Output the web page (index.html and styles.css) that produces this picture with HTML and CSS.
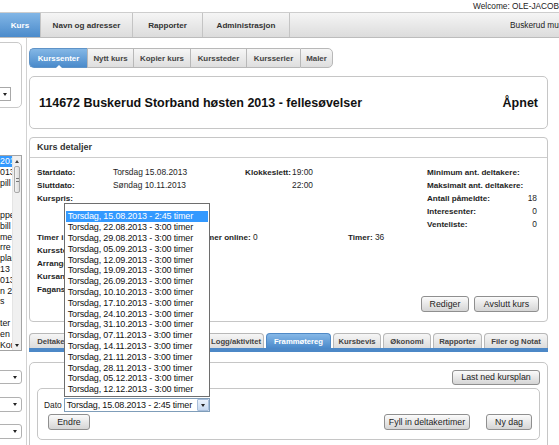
FILE: index.html
```html
<!DOCTYPE html>
<html lang="no">
<head>
<meta charset="utf-8">
<title>Kurssenter</title>
<link rel="stylesheet" href="styles.css">
</head>
<body>
<div class="welcome">Welcome: OLE-JACOB.</div>
<nav class="nav">
  <div class="nav-tab active t-kurs">Kurs</div>
  <div class="nav-tab t-navn">Navn og adresser</div>
  <div class="nav-tab t-rapp">Rapporter</div>
  <div class="nav-tab t-adm">Administrasjon</div>
  <div class="nav-rest">Buskerud musikkskole</div>
</nav>
<div class="page">
  <aside class="side">
    <div class="side-box">
      <div class="mini-select"><span class="arrow"></span></div>
    </div>
    <div class="side-list">
      <div class="side-items">
        <div class="li sel">201</div>
        <div class="li">013</div>
        <div class="li">pill</div>
        <div class="li"></div>
        <div class="li"></div>
        <div class="li">ppe</div>
        <div class="li">bill</div>
        <div class="li">mer</div>
        <div class="li">rre</div>
        <div class="li">plan</div>
        <div class="li">13 -</div>
        <div class="li">013</div>
        <div class="li">n 2</div>
        <div class="li">s</div>
        <div class="li"></div>
        <div class="li">ter</div>
        <div class="li">en</div>
        <div class="li">Kor</div>
      </div>
      <div class="vscroll">
        <div class="sb-btn"><span class="up"></span></div>
        <div class="sb-thumb"><span class="grip"></span></div>
        <div class="sb-track"></div>
        <div class="sb-btn"><span class="arrow"></span></div>
      </div>
    </div>
    <div class="side-select s1"><span class="arrow"></span></div>
    <div class="side-select s2"><span class="arrow"></span></div>
    <div class="side-select s3"><span class="arrow"></span></div>
  </aside>

  <main class="main">
    <div class="subtabs">
      <div class="st active w58">Kurssenter</div>
      <div class="st w46">Nytt kurs</div>
      <div class="st w57">Kopier kurs</div>
      <div class="st w56">Kurssteder</div>
      <div class="st w54">Kursserier</div>
      <div class="st w33 last">Maler</div>
    </div>

    <div class="titlebox">
      <h1 class="title">114672 Buskerud Storband høsten 2013 - fellesøvelser</h1>
      <span class="status">Åpnet</span>
    </div>

    <section class="details">
      <div class="details-head">Kurs detaljer</div>
      <div class="details-body">
        <div class="dgrid">
          <b>Startdato:</b><span>Torsdag 15.08.2013</span><b class="ra span2">Klokkeslett:</b><span>19:00</span><span></span><b>Minimum ant. deltakere:</b><span class="val"></span>
          <b>Sluttdato:</b><span>Søndag 10.11.2013</span><span></span><span></span><span>22:00</span><span></span><b>Maksimalt ant. deltakere:</b><span class="val"></span>
          <b>Kurspris:</b><span></span><span></span><span></span><span></span><span></span><b>Antall påmeldte:</b><span class="val">18</span>
          <span></span><span></span><span></span><span></span><span></span><span></span><b>Interesenter:</b><span class="val">0</span>
          <span></span><span></span><span></span><span></span><span></span><span></span><b>Venteliste:</b><span class="val">0</span>
          <b>Timer i klasse:</b><span></span><span><b>Timer online:</b> 0</span><span></span><span></span><span><b>Timer:</b> 36</span><span></span><span class="val"></span>
          <b>Kurssted:</b><span></span><span></span><span></span><span></span><span></span><span></span><span class="val"></span>
          <b>Arrangør:</b><span></span><span></span><span></span><span></span><span></span><span></span><span class="val"></span>
          <b>Kursansvarlig:</b><span></span><span></span><span></span><span></span><span></span><span></span><span class="val"></span>
          <b>Fagansvarlig:</b><span></span><span></span><span></span><span></span><span></span><span></span><span class="val"></span>
        </div>
        <div class="btnrow">
          <button class="btn b-rediger">Rediger</button>
          <button class="btn b-avslutt">Avslutt kurs</button>
        </div>
      </div>
    </section>

    <div class="btabs">
      <div class="bt bw51">Deltakere</div>
      <div class="bt bw54">Venteliste</div>
      <div class="bt bw60">Kursplan</div>
      <div class="bt bw64 logg">Logg/aktivitet</div>
      <div class="bt active bw65">Frammøtereg</div>
      <div class="bt bw48">Kursbevis</div>
      <div class="bt bw48">Økonomi</div>
      <div class="bt bw49">Rapporter</div>
      <div class="bt bw64">Filer og Notat</div>
    </div>
    <div class="bbar"></div>

    <section class="panel">
      <div class="panel-top">
        <button class="btn b-last">Last ned kursplan</button>
      </div>
      <div class="inner">
        <div class="dato-row">
          <span class="dato">Dato</span>
          <div class="combo">
            <span class="combo-text">Torsdag, 15.08.2013 - 2:45 timer</span>
            <span class="combo-btn"><span class="arrow"></span></span>
            <div class="droplist">
              <div class="opt hl">Torsdag, 15.08.2013 - 2:45 timer</div>
              <div class="opt">Torsdag, 22.08.2013 - 3:00 timer</div>
              <div class="opt">Torsdag, 29.08.2013 - 3:00 timer</div>
              <div class="opt">Torsdag, 05.09.2013 - 3:00 timer</div>
              <div class="opt">Torsdag, 12.09.2013 - 3:00 timer</div>
              <div class="opt">Torsdag, 19.09.2013 - 3:00 timer</div>
              <div class="opt">Torsdag, 26.09.2013 - 3:00 timer</div>
              <div class="opt">Torsdag, 10.10.2013 - 3:00 timer</div>
              <div class="opt">Torsdag, 17.10.2013 - 3:00 timer</div>
              <div class="opt">Torsdag, 24.10.2013 - 3:00 timer</div>
              <div class="opt">Torsdag, 31.10.2013 - 3:00 timer</div>
              <div class="opt">Torsdag, 07.11.2013 - 3:00 timer</div>
              <div class="opt">Torsdag, 14.11.2013 - 3:00 timer</div>
              <div class="opt">Torsdag, 21.11.2013 - 3:00 timer</div>
              <div class="opt">Torsdag, 28.11.2013 - 3:00 timer</div>
              <div class="opt">Torsdag, 05.12.2013 - 3:00 timer</div>
              <div class="opt">Torsdag, 12.12.2013 - 3:00 timer</div>
            </div>
          </div>
        </div>
        <div class="act-row">
          <button class="btn b-endre">Endre</button>
          <div class="act-right">
            <button class="btn b-fyll">Fyll in deltakertimer</button>
            <button class="btn b-ny">Ny dag</button>
          </div>
        </div>
      </div>
    </section>
  </main>
</div>
</body>
</html>
```

FILE: styles.css
```css
* { box-sizing: border-box; }
html, body { margin: 0; padding: 0; }
body {
  width: 559px;
  height: 445px;
  overflow: hidden;
  background: #fff;
  color: #1e1e1e;
  font-family: "Liberation Sans", Arial, sans-serif;
  font-size: 8.4px;
}

/* ---------- top ---------- */
.welcome {
  height: 12px;
  line-height: 12px;
  padding-left: 473px;
  white-space: nowrap;
  overflow: hidden;
  font-size: 8.3px;
  color: #222;
}
.nav {
  display: flex;
  height: 26px;
  background: linear-gradient(#f5f5f5, #dcdcdc);
  border-top: 1px solid #cdcdcd;
  border-bottom: 1px solid #bcbcbc;
}
.nav-tab {
  flex: none;
  display: flex;
  align-items: center;
  justify-content: center;
  font-weight: bold;
  font-size: 8.1px;
  color: #333;
  border-right: 1px solid #c4c4c4;
}
.nav-tab.active {
  background: linear-gradient(#82b6e6, #4b8bcb);
  color: #fff;
}
.t-kurs { width: 41px; }
.t-navn { width: 92px; }
.t-rapp { width: 70px; }
.t-adm { width: 87px; }
.nav-rest {
  flex: 1;
  display: flex;
  align-items: center;
  padding-left: 220px;
  white-space: nowrap;
  overflow: hidden;
  font-size: 8.3px;
  color: #222;
}

.page { display: flex; }

/* ---------- sidebar ---------- */
.side {
  flex: none;
  width: 27px;
  height: 407px;
  border-right: 1px solid #d2d2d2;
  overflow: hidden;
}
.arrow {
  display: block;
  width: 0;
  height: 0;
  border-left: 2.5px solid transparent;
  border-right: 2.5px solid transparent;
  border-top: 3px solid #222;
}
.up {
  display: block;
  width: 0;
  height: 0;
  border-left: 2.5px solid transparent;
  border-right: 2.5px solid transparent;
  border-bottom: 3px solid #444;
}
.side-box {
  margin: 4px 0 0 -10px;
  width: 32px;
  height: 66px;
  border: 1px solid #c9c9c9;
  border-radius: 0 5px 5px 0;
}
.mini-select {
  margin-top: 44px;
  width: 20px;
  height: 14px;
  border: 1px solid #a8a8a8;
  border-left: none;
  display: flex;
  align-items: center;
  justify-content: flex-end;
  padding-right: 3px;
}
.side-list {
  margin: 47px 0 0 -10px;
  width: 32px;
  height: 196px;
  border: 1px solid #a3a3a3;
  display: flex;
}
.side-items {
  flex: 1;
  overflow: hidden;
}
.li {
  height: 10.8px;
  line-height: 10.8px;
  padding-left: 9px;
  white-space: nowrap;
  font-size: 8.8px;
  color: #111;
}
.li.sel { background: #3399ff; color: #fff; }
.vscroll {
  flex: none;
  width: 9px;
  display: flex;
  flex-direction: column;
  background: #f0f0f0;
  border-left: 1px solid #e4e4e4;
}
.sb-btn {
  height: 10px;
  display: flex;
  align-items: center;
  justify-content: center;
}
.sb-thumb {
  height: 27px;
  margin: 0 1px;
  border: 1px solid #a9a9a9;
  border-radius: 2px;
  background: linear-gradient(90deg, #f4f4f4, #dcdcdc);
  display: flex;
  align-items: center;
  justify-content: center;
}
.grip {
  display: block;
  width: 3px;
  height: 4px;
  border-top: 1px solid #777;
  border-bottom: 1px solid #777;
}
.sb-track { flex: 1; }
.side-select {
  margin-left: -10px;
  width: 32px;
  border: 1px solid #b1b1b1;
  border-radius: 0 3px 3px 0;
  display: flex;
  align-items: center;
  justify-content: flex-end;
  padding-right: 4px;
}
.s1 { margin-top: 19px; height: 14px; }
.s2 { margin-top: 13px; height: 15px; }
.s3 { margin-top: 12px; height: 15px; }

/* ---------- main ---------- */
.main {
  flex: none;
  width: 519px;
  margin-left: 2px;
}
.subtabs {
  display: flex;
  margin-top: 10px;
  height: 20px;
}
.st {
  position: relative;
  display: flex;
  align-items: center;
  justify-content: center;
  font-weight: bold;
  font-size: 7.9px;
  color: #444;
  background: linear-gradient(#f6f6f6, #dedede);
  border: 1px solid #b8b8b8;
  border-right: none;
}
.st.last { border-right: 1px solid #b8b8b8; border-radius: 0 5px 5px 0; }
.st.active {
  background: linear-gradient(#84b7e6, #4a8acb);
  border-color: #5f93c7;
  color: #fff;
  border-radius: 5px 0 0 5px;
}
.st.active::after {
  content: "";
  position: absolute;
  left: 50%;
  bottom: -1px;
  margin-left: -3px;
  border-left: 3px solid transparent;
  border-right: 3px solid transparent;
  border-bottom: 3px solid #fff;
}
.w58 { width: 58px; }
.w46 { width: 46px; }
.w57 { width: 57px; }
.w56 { width: 56px; }
.w54 { width: 54px; }
.w33 { width: 33px; }

.titlebox {
  margin-top: 8px;
  height: 53px;
  border: 1px solid #c6c6c6;
  border-radius: 5px;
  display: flex;
  align-items: center;
  justify-content: space-between;
  padding: 0 9px 0 9px;
}
.title, .status {
  margin: 0;
  font-size: 12.5px;
  font-weight: bold;
  color: #111;
}

.details {
  margin-top: 8px;
  height: 185px;
  border: 1px solid #c6c6c6;
  border-radius: 4px;
}
.details-head {
  height: 20px;
  line-height: 19px;
  padding-left: 7px;
  border-bottom: 1px solid #cdcdcd;
  font-weight: bold;
  font-size: 9px;
  color: #333;
}
.details-body {
  padding: 8px 8px 0 7px;
}
.dgrid {
  display: grid;
  grid-template-columns: 76px 87px 49px 43px 56px 79px 1fr auto;
  grid-auto-rows: 13px;
  line-height: 13px;
  white-space: nowrap;
}
.dgrid b { font-weight: bold; font-size: 8.1px; }
.dgrid .span2 { grid-column: span 2; }
.dgrid .ra { text-align: right; padding-right: 1px; }
.val { text-align: right; padding-right: 2px; }
.btnrow {
  display: flex;
  justify-content: flex-end;
  gap: 5px;
}

.btn {
  height: 16px;
  padding: 0;
  border: 1px solid #8f8f8f;
  border-radius: 3px;
  background: linear-gradient(#fbfbfb, #d5d5d5);
  font-family: "Liberation Sans", Arial, sans-serif;
  font-size: 8.8px;
  color: #1e1e1e;
  text-align: center;
  line-height: 14px;
}
.b-rediger { width: 48px; }
.b-avslutt { width: 65px; }
.b-last { width: 88px; height: 15px; line-height: 13px; }
.b-endre { width: 42px; margin-left: 4px; }
.b-fyll { width: 86px; }
.b-ny { width: 46px; }

.btabs {
  display: flex;
  gap: 2px;
  margin-top: 11px;
  height: 15px;
}
.bt {
  flex: none;
  display: flex;
  align-items: center;
  justify-content: center;
  white-space: nowrap;
  overflow: hidden;
  font-weight: bold;
  font-size: 7.7px;
  color: #444;
  background: linear-gradient(#f6f6f6, #dcdcdc);
  border: 1px solid #b8b8b8;
  border-bottom: none;
  border-radius: 4px 4px 0 0;
}
.bt.logg { justify-content: flex-end; padding-right: 2px; }
.bt.active {
  background: linear-gradient(#86b8e7, #4b8acb);
  border-color: #4f89c6;
  color: #fff;
}
.bw51 { width: 51px; }
.bw54 { width: 54px; }
.bw60 { width: 60px; }
.bw64 { width: 64px; }
.bw65 { width: 65px; }
.bw48 { width: 48px; }
.bw49 { width: 49px; }
.bbar {
  height: 4px;
  background: #4c88c7;
}

.panel {
  margin-top: 10px;
  height: 100px;
  border: 1px solid #c6c6c6;
  border-radius: 5px;
  padding: 7px 7px 0 7px;
}
.panel-top {
  display: flex;
  justify-content: flex-end;
}
.inner {
  margin-top: 3px;
  height: 52px;
  border: 1px solid #c6c6c6;
  border-radius: 5px;
  padding: 9px 6px 0 6px;
}
.dato-row {
  display: flex;
  align-items: center;
  gap: 2px;
  height: 14px;
}
.dato { font-size: 8.4px; color: #222; }
.combo {
  position: relative;
  width: 146px;
  height: 14px;
  border: 1px solid #7f9db9;
  display: flex;
  align-items: center;
  background: #fff;
}
.combo-text {
  flex: 1;
  padding-left: 2px;
  font-size: 9px;
  letter-spacing: -0.15px;
  color: #111;
  white-space: nowrap;
  overflow: hidden;
}
.combo-btn {
  flex: none;
  width: 12px;
  height: 12px;
  border: 1px solid #a8bedb;
  border-radius: 1px;
  background: linear-gradient(#eaf2fc, #c6d8ef);
  display: flex;
  align-items: center;
  justify-content: center;
}
.droplist {
  position: absolute;
  left: -1px;
  bottom: calc(100% + 2px);
  width: 146px;
  padding: 7px 1px 1px 1px;
  border: 1px solid #6e6e6e;
  background: #fff;
  z-index: 10;
}
.opt {
  height: 10.8px;
  line-height: 10.8px;
  padding-left: 2px;
  font-size: 9px;
  letter-spacing: -0.15px;
  color: #111;
  white-space: nowrap;
}
.opt.hl { background: #3399ff; color: #fff; }

.act-row {
  display: flex;
  justify-content: space-between;
  margin-top: 2px;
}
.act-right {
  display: flex;
  gap: 16px;
  padding-right: 1px;
}
```
